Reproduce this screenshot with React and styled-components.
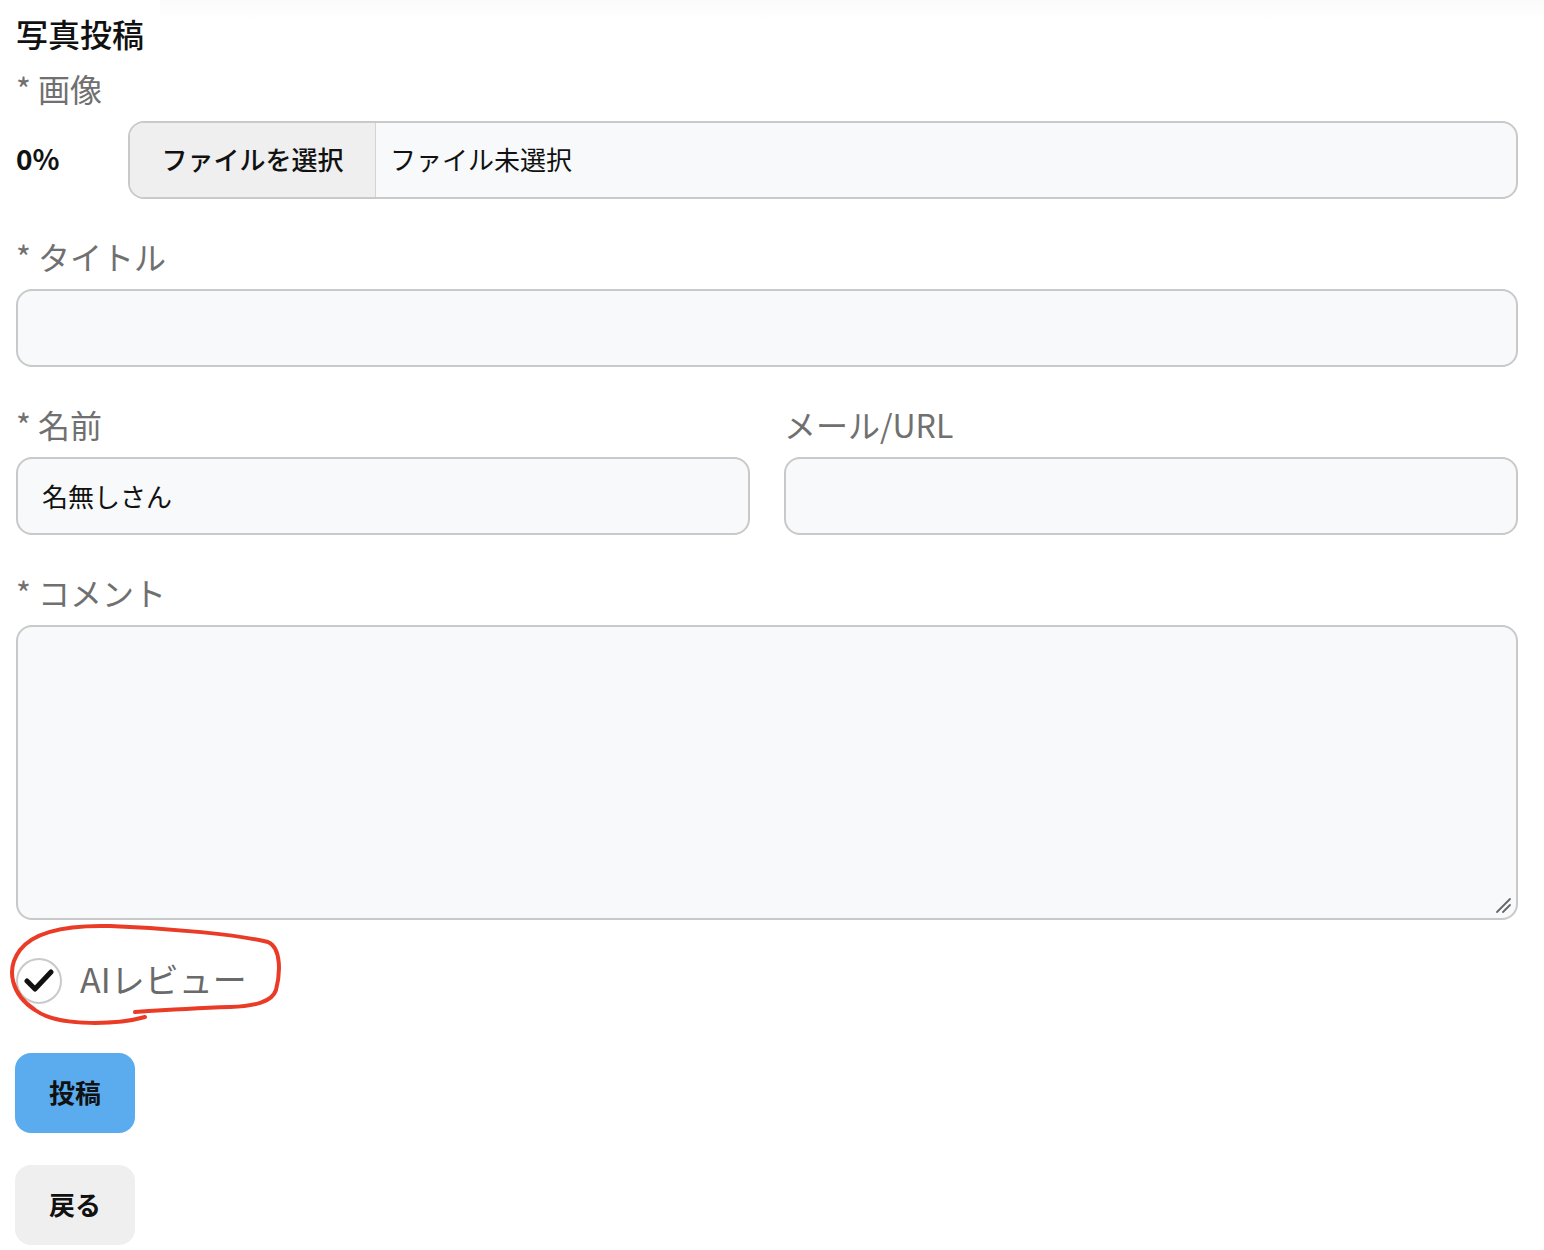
import React from "react";
import styled, { createGlobalStyle } from "styled-components";

const GlobalStyle = createGlobalStyle`
  html, body { margin: 0; padding: 0; background: #ffffff; }
  body {
    font-family: "Noto Sans CJK JP", "Noto Sans", sans-serif;
    color: #111;
  }
  * { box-sizing: border-box; }
`;

const Page = styled.div`
  position: relative;
  padding: 16px 26px 0 16px;
  min-height: 1250px;
`;

const TopShade = styled.div`
  position: absolute;
  left: 160px;
  right: 0;
  top: 0;
  height: 20px;
  background: linear-gradient(to bottom, rgba(0, 0, 0, 0.018), rgba(0, 0, 0, 0));
  pointer-events: none;
`;

const Title = styled.h1`
  margin: 0;
  font-size: 32px;
  line-height: 34px;
  padding-bottom: 6px;
  font-weight: 500;
  color: #111;
`;

const Group = styled.div`
  display: flex;
  flex-direction: column;
  gap: 10px;
  margin-top: ${(p) => p.$top || 40}px;
`;

const Label = styled.label`
  font-size: 32px;
  line-height: 34px;
  padding-bottom: 6px;
  color: #707070;
  font-weight: 400;
`;

const Row = styled.div`
  display: flex;
  align-items: center;
`;

const Percent = styled.span`
  width: 112px;
  font-size: 28px;
  font-weight: 700;
  color: #111;
  padding-bottom: 5px;
`;

const FileBox = styled.div`
  flex: 1;
  display: flex;
  height: 78px;
  border: 2px solid #c9c9c9;
  border-radius: 16px;
  background: #f8f9fa;
  overflow: hidden;
`;

const FileButton = styled.div`
  width: 246px;
  display: flex;
  align-items: center;
  justify-content: center;
  background: #efefef;
  border-right: 1px solid #d4d4d4;
  font-size: 26px;
  font-weight: 500;
  color: #111;
  padding-bottom: 3px;
`;

const FileName = styled.div`
  display: flex;
  align-items: center;
  padding: 0 0 3px 14px;
  font-size: 26px;
  color: #111;
`;

const TextInput = styled.input`
  width: 100%;
  height: 78px;
  border: 2px solid #c9c9c9;
  border-radius: 16px;
  background: #f8f9fa;
  padding: 0 24px 2px;
  font-family: inherit;
  font-size: 26px;
  color: #111;
  outline: none;
`;

const TwoCol = styled.div`
  display: grid;
  grid-template-columns: 1fr 1fr;
  column-gap: 34px;
  margin-top: 40px;
`;

const Col = styled.div`
  display: flex;
  flex-direction: column;
  gap: 10px;
`;

const AreaWrap = styled.div`
  position: relative;
`;

const TextArea = styled.textarea`
  width: 100%;
  height: 295px;
  border: 2px solid #c9c9c9;
  border-radius: 16px;
  background: #f8f9fa;
  padding: 20px 24px;
  font-family: inherit;
  font-size: 26px;
  outline: none;
  display: block;
  resize: none;
`;

const Grip = styled.svg`
  position: absolute;
  right: 6px;
  bottom: 6px;
  width: 18px;
  height: 18px;
  pointer-events: none;
`;

const CheckWrap = styled.div`
  position: relative;
  display: flex;
  align-items: center;
  gap: 18px;
  margin-top: 38px;
  height: 46px;
`;

const CheckCircle = styled.span`
  width: 46px;
  height: 46px;
  border-radius: 50%;
  border: 2px solid #c9c9c9;
  background: #fff;
  display: flex;
  align-items: center;
  justify-content: center;
`;

const CheckText = styled.span`
  font-size: 34px;
  line-height: 40px;
  padding-bottom: 5px;
  color: #6a6a6a;
`;

const Annotation = styled.svg`
  position: absolute;
  left: -16px;
  top: -43px;
  width: 300px;
  height: 130px;
  pointer-events: none;
  overflow: visible;
`;

const Button = styled.button`
  display: flex;
  align-items: center;
  justify-content: center;
  width: 120px;
  height: 80px;
  margin-top: ${(p) => p.$top}px;
  margin-left: -1px;
  padding: 0 0 3px;
  border: none;
  border-radius: 16px;
  background: ${(p) => (p.$primary ? "#5aacee" : "#efefef")};
  font-family: inherit;
  font-size: 26px;
  font-weight: 700;
  color: #111;
  cursor: pointer;
`;

export default function App() {
  return (
    <>
      <GlobalStyle />
      <Page>
        <TopShade />
        <Title>写真投稿</Title>

        <Group $top={15}>
          <Label>* 画像</Label>
          <Row>
            <Percent>0%</Percent>
            <FileBox>
              <FileButton>ファイルを選択</FileButton>
              <FileName>ファイル未選択</FileName>
            </FileBox>
          </Row>
        </Group>

        <Group>
          <Label>* タイトル</Label>
          <TextInput type="text" />
        </Group>

        <TwoCol>
          <Col>
            <Label>* 名前</Label>
            <TextInput type="text" defaultValue="名無しさん" />
          </Col>
          <Col>
            <Label>メール/URL</Label>
            <TextInput type="text" />
          </Col>
        </TwoCol>

        <Group>
          <Label>* コメント</Label>
          <AreaWrap>
            <TextArea />
            <Grip viewBox="0 0 18 18">
              <path d="M3 16 L16 3 M9 16 L16 9" stroke="#666" strokeWidth="1.8" strokeLinecap="round" />
            </Grip>
          </AreaWrap>
        </Group>

        <CheckWrap>
          <CheckCircle>
            <svg width="30" height="26" viewBox="0 0 30 26">
              <path
                d="M3 13 L11 21 L27 4"
                fill="none"
                stroke="#111"
                strokeWidth="5"
                strokeLinecap="round"
                strokeLinejoin="round"
              />
            </svg>
          </CheckCircle>
          <CheckText>AIレビュー</CheckText>
          <Annotation viewBox="0 915 300 130">
            <path
              d="M145 1017 C120 1024 60 1028 35 1010 C12 995 5 970 20 950 C35 930 70 925 110 926 C170 928 240 935 268 942 C282 948 280 975 276 990 C272 1002 255 1006 230 1007 C200 1008 165 1010 135 1012"
              fill="none"
              stroke="#ea3b26"
              strokeWidth="4"
              strokeLinecap="round"
              strokeLinejoin="round"
            />
          </Annotation>
        </CheckWrap>

        <Button $primary $top={49}>投稿</Button>
        <Button $top={32}>戻る</Button>
      </Page>
    </>
  );
}
